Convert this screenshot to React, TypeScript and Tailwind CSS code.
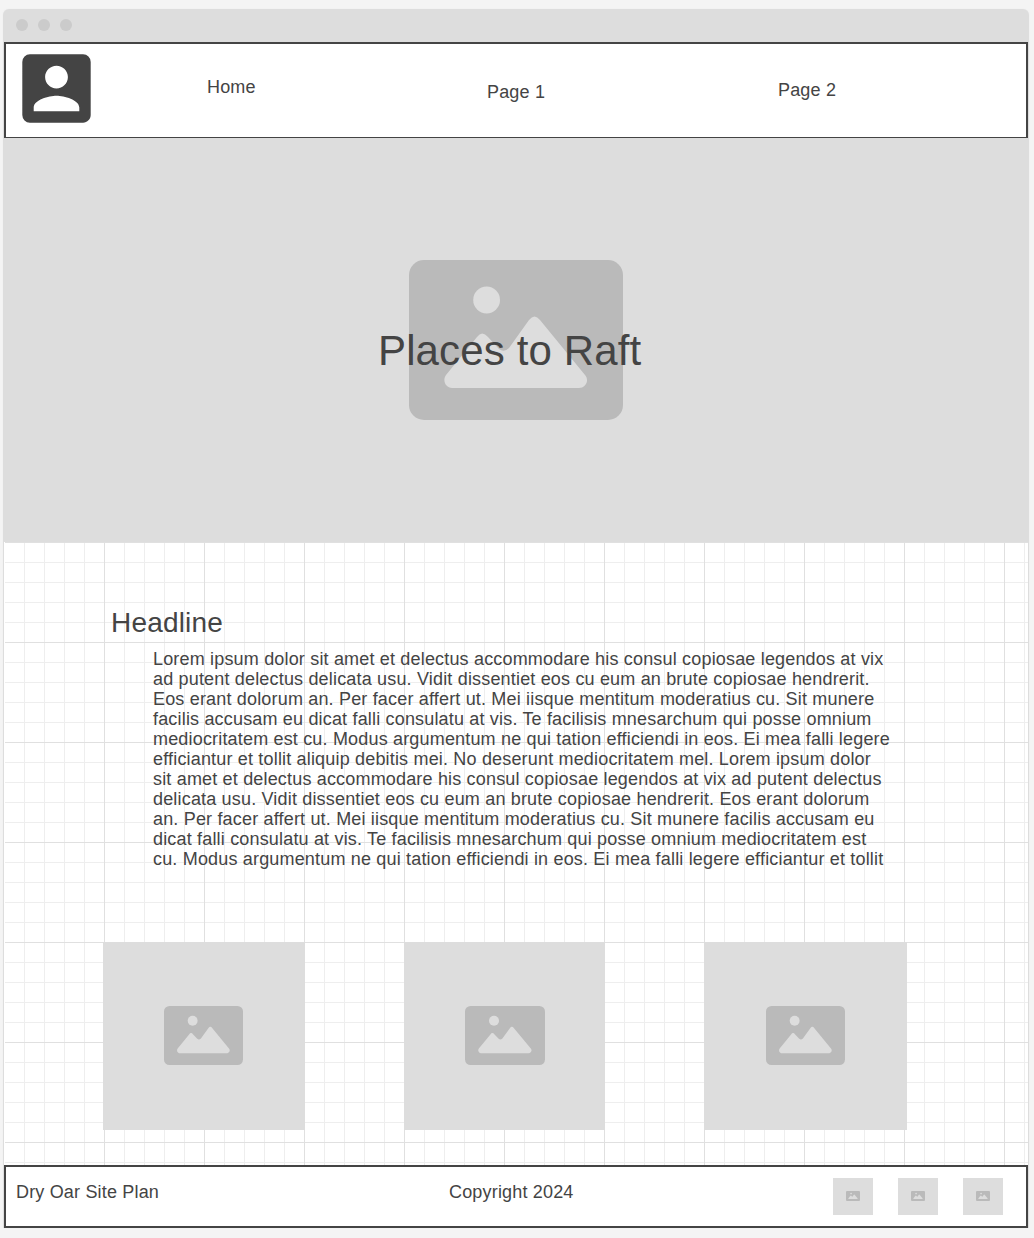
const LINES = [
  'Lorem ipsum dolor sit amet et delectus accommodare his consul copiosae legendos at vix',
  'ad putent delectus delicata usu. Vidit dissentiet eos cu eum an brute copiosae hendrerit.',
  'Eos erant dolorum an. Per facer affert ut. Mei iisque mentitum moderatius cu. Sit munere',
  'facilis accusam eu dicat falli consulatu at vis. Te facilisis mnesarchum qui posse omnium',
  'mediocritatem est cu. Modus argumentum ne qui tation efficiendi in eos. Ei mea falli legere',
  'efficiantur et tollit aliquip debitis mei. No deserunt mediocritatem mel. Lorem ipsum dolor',
  'sit amet et delectus accommodare his consul copiosae legendos at vix ad putent delectus',
  'delicata usu. Vidit dissentiet eos cu eum an brute copiosae hendrerit. Eos erant dolorum',
  'an. Per facer affert ut. Mei iisque mentitum moderatius cu. Sit munere facilis accusam eu',
  'dicat falli consulatu at vis. Te facilisis mnesarchum qui posse omnium mediocritatem est',
  'cu. Modus argumentum ne qui tation efficiendi in eos. Ei mea falli legere efficiantur et tollit',
];

function Picture({ className }: { className: string }) {
  return (
    <svg viewBox="0 0 214 160" preserveAspectRatio="none" className={`block shrink-0 ${className}`} aria-hidden="true">
      <rect width="214" height="160" rx="15" fill="#bababa" />
      <circle cx="77.6" cy="40" r="13.4" fill="#ddd" />
      <path
        d="M37 115 L68 77 Q73 70 79 77 L90 89 Q95 93 100 88 L120 60 Q125.500 53 131 60 L176 115 C181 121 176 128 170 128 H43 C37 128 33 121 37 115 Z"
        fill="#ddd"
      />
    </svg>
  );
}

export default function App() {
  return (
    <div className="h-[1238px] w-[1034px] overflow-hidden bg-[#f4f4f4] pl-[3px] pt-[9px] font-['Liberation_Sans',Arial,sans-serif] text-[18px] leading-5 tracking-[0.175px] text-[#444]">
      <div className="flex h-[1219px] w-[1026px] flex-col rounded-t-[6px] bg-[#ddd] shadow-[0_0_2px_rgba(0,0,0,0.04)]">
        <div className="flex h-[33px] shrink-0 items-start gap-[10px] pl-[13px] pt-[10px]">
          <i className="size-3 rounded-full bg-[#cbcbcb]" />
          <i className="size-3 rounded-full bg-[#cbcbcb]" />
          <i className="size-3 rounded-full bg-[#cbcbcb]" />
        </div>
        <header className="mx-px flex h-24 shrink-0 items-start border-2 border-b border-[#444] bg-white">
          <svg viewBox="2.92 2.92 18.16 18.16" className="ml-4 mt-[10px] size-[69px]" fill="#444" aria-hidden="true">
            <path d="M3 5v14a2 2 0 0 0 2 2h14c1.100 0 2-.9 2-2V5a2 2 0 0 0-2-2H5a2 2 0 0 0-2 2zm12 4c0 1.660-1.340 3-3 3s-3-1.340-3-3 1.340-3 3-3 3 1.340 3 3zm-9 8c0-2 4-3.100 6-3.100s6 1.100 6 3.100v1H6v-1z" />
          </svg>
          <nav className="flex">
            <a className="ml-[116px] mt-[33px] w-[280px]">Home</a>
            <a className="mt-[38px] w-[291px]">Page 1</a>
            <a className="mt-9">Page 2</a>
          </nav>
        </header>
        <section className="grid h-[404px] shrink-0 place-items-start">
          <Picture className="col-start-1 row-start-1 ml-[406px] mt-[122px] h-40 w-[214px]" />
          <h1 className="z-10 col-start-1 row-start-1 ml-[375px] mt-[189px] text-[42px] leading-[48px] tracking-[0.13px]">Places to Raft</h1>
        </section>
        <main className="mx-px h-[623px] shrink-0 border-l border-white bg-white bg-[linear-gradient(90deg,#e0e0e0_1px,transparent_1px),linear-gradient(#e0e0e0_1px,transparent_1px),linear-gradient(90deg,#eee_1px,transparent_1px),linear-gradient(#eee_1px,transparent_1px)] bg-[size:100px_100px,100px_100px,20px_20px,20px_20px] bg-origin-border">
          <h2 className="ml-[106px] pt-[65px] text-[28px] leading-8">Headline</h2>
          <div className="ml-[148px] mt-[10px] whitespace-nowrap">
            {LINES.map((line) => (
              <p key={line}>{line}</p>
            ))}
          </div>
          <div className="mt-[73px] flex">
            <div className="ml-[98px] flex h-[188px] w-[202px] bg-[#ddd] pl-[61px] pt-16">
              <Picture className="h-[59px] w-[79px]" />
            </div>
            <div className="ml-[99px] flex h-[188px] w-[201px] bg-[#ddd] pl-[61px] pt-16">
              <Picture className="h-[59px] w-20" />
            </div>
            <div className="ml-[99px] flex h-[188px] w-[203px] bg-[#ddd] pl-[62px] pt-16">
              <Picture className="h-[59px] w-[79px]" />
            </div>
          </div>
        </main>
        <footer className="mx-px flex h-[63px] shrink-0 border-2 border-[#444] bg-white">
          <p className="ml-[10px] mt-[15px] w-[433px]">Dry Oar Site Plan</p>
          <p className="mt-[15px] w-[384px]">Copyright 2024</p>
          <div className="mt-[11px] flex gap-[25px]">
            {[0, 1, 2].map((n) => (
              <div key={n} className="flex h-[37px] w-10 bg-[#ddd] pl-[13px] pt-[13px]">
                <Picture className="h-[10px] w-[14px]" />
              </div>
            ))}
          </div>
        </footer>
      </div>
    </div>
  );
}
